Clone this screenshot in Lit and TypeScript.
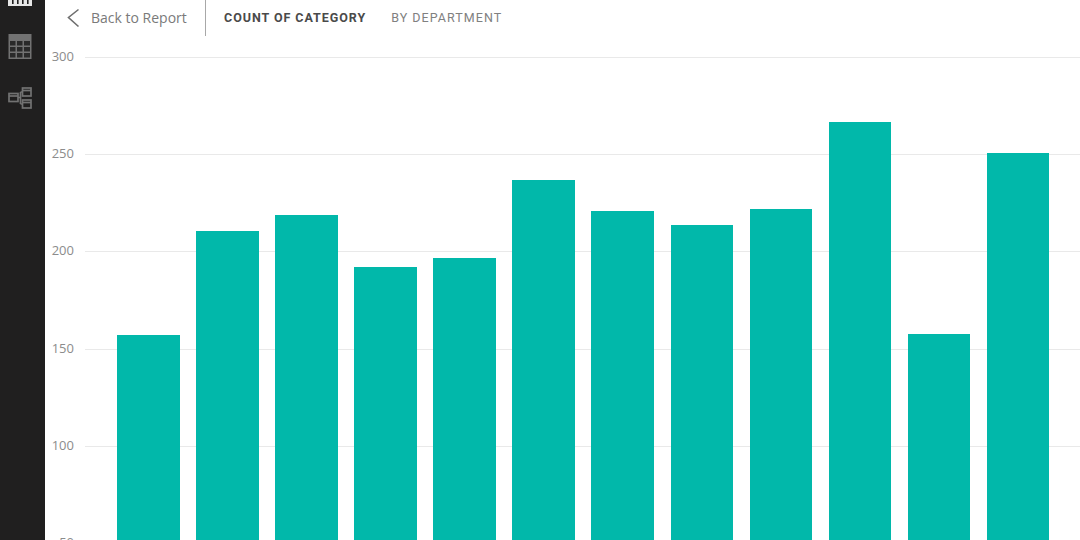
import { LitElement, html, css, svg } from "lit";
import { customElement } from "lit/decorators.js";

const VALUES = [157, 211, 219, 192, 197, 237, 221, 214, 222, 267, 158, 251];
const TICKS = [300, 250, 200, 150, 100, 50];
const PX = 1.944;
const yOf = (v: number) => (300 - v) * PX;

@customElement("app-root")
export class AppRoot extends LitElement {
  static styles = css`
    :host { display: block; width: 1080px; height: 540px; overflow: hidden; background: #fff; font-family: "Open Sans", sans-serif; }
    .page { display: flex; width: 1080px; height: 540px; }
    .rail { width: 45px; flex: none; background: #201f1f; display: flex; flex-direction: column; align-items: center; }
    .rail svg { display: block; flex: none; }
    .i1 { margin-top: -8px; margin-left: -5px; }
    .i2 { margin-top: 27px; margin-left: -5px; }
    .i3 { margin-top: 27px; margin-left: -5px; }
    .main { flex: 1; min-width: 0; display: flex; flex-direction: column; }
    .head { height: 36px; flex: none; display: flex; align-items: center; }
    .back { margin-left: 21px; width: 14px; height: 20px; flex: none; }
    .backtext { margin-left: 11px; padding-bottom: 2px; font-size: 14px; color: #7a7a7a; width: 114px; white-space: nowrap; }
    .divider { width: 1px; height: 36px; background: #a8a8a8; flex: none; }
    .t1, .t2 { font-family: Roboto, sans-serif; font-size: 12.5px; white-space: nowrap; padding-bottom: 2px; }
    .t1 { margin-left: 18px; font-weight: 700; color: #4a4a4a; letter-spacing: 0.95px; }
    .t2 { margin-left: 25px; font-weight: 400; color: #808080; letter-spacing: 1.05px; }
    .chart { position: relative; flex: 1; margin-top: 21.5px; }
    .tick { position: absolute; left: 0; right: 0; height: 0; }
    .tick span { position: absolute; right: 1006px; top: -10px; font-size: 13px; line-height: 18px; color: #8c8c8c; }
    .tick i { position: absolute; left: 40px; right: 0; top: 0; height: 1px; background: #e9e9e9; }
    .bars { position: absolute; left: 72.3px; top: 0; height: 486px; display: flex; gap: 16.54px; align-items: flex-start; }
    .bar { width: 62.5px; background: #01b8aa; height: 600px; }
  `;

  private icon1() {
    return svg`<svg class="i1" width="26" height="15" viewBox="0 0 26 15">
      <rect x="1" y="1" width="24" height="13" fill="#e6e6e6"/>
      <g fill="#201f1f"><rect x="5" y="1" width="1.6" height="11"/><rect x="10" y="1" width="1.6" height="11"/><rect x="15" y="1" width="1.6" height="11"/><rect x="20" y="1" width="1.6" height="11"/></g>
    </svg>`;
  }
  private icon2() {
    return svg`<svg class="i2" width="24" height="26" viewBox="0 0 24 26">
      <rect x="0.5" y="0" width="23" height="25" fill="#727272"/>
      <g fill="#2a2a2a">
        <rect x="2" y="7" width="5.5" height="4.5"/><rect x="9" y="7" width="5.5" height="4.5"/><rect x="16" y="7" width="6" height="4.5"/>
        <rect x="2" y="13" width="5.5" height="4.5"/><rect x="9" y="13" width="5.5" height="4.5"/><rect x="16" y="13" width="6" height="4.5"/>
        <rect x="2" y="19" width="5.5" height="4.5"/><rect x="9" y="19" width="5.5" height="4.5"/><rect x="16" y="19" width="6" height="4.5"/>
      </g>
    </svg>`;
  }
  private icon3() {
    return svg`<svg class="i3" width="24" height="22" viewBox="0 0 24 22" fill="none" stroke="#727272" stroke-width="1.7">
      <rect x="1" y="6.5" width="9" height="8"/><line x1="1" y1="9" x2="10" y2="9"/>
      <rect x="14.5" y="1" width="8.5" height="8"/><line x1="14.5" y1="3.5" x2="23" y2="3.5"/>
      <rect x="14.5" y="13" width="8.5" height="8"/><line x1="14.5" y1="15.5" x2="23" y2="15.5"/>
      <path d="M10 10.5H12.5M12.5 5V17M12.5 5H14.5M12.5 17H14.5"/>
    </svg>`;
  }

  render() {
    return html`<div class="page">
      <nav class="rail">${this.icon1()}${this.icon2()}${this.icon3()}</nav>
      <div class="main">
        <header class="head">
          <svg class="back" viewBox="0 0 14 20" fill="none" stroke="#6e6e6e" stroke-width="1.6"><path d="M12.5 1.5L2.5 9.5L12.5 18.5"/></svg>
          <span class="backtext">Back to Report</span>
          <span class="divider"></span>
          <span class="t1">COUNT OF CATEGORY</span>
          <span class="t2">BY DEPARTMENT</span>
        </header>
        <div class="chart">
          ${TICKS.map((t) => html`<div class="tick" style="top:${yOf(t) - 0.5}px"><span>${t}</span><i></i></div>`)}
          <div class="bars">
            ${VALUES.map((v) => html`<div class="bar" style="margin-top:${yOf(v)}px"></div>`)}
          </div>
        </div>
      </div>
    </div>`;
  }
}
